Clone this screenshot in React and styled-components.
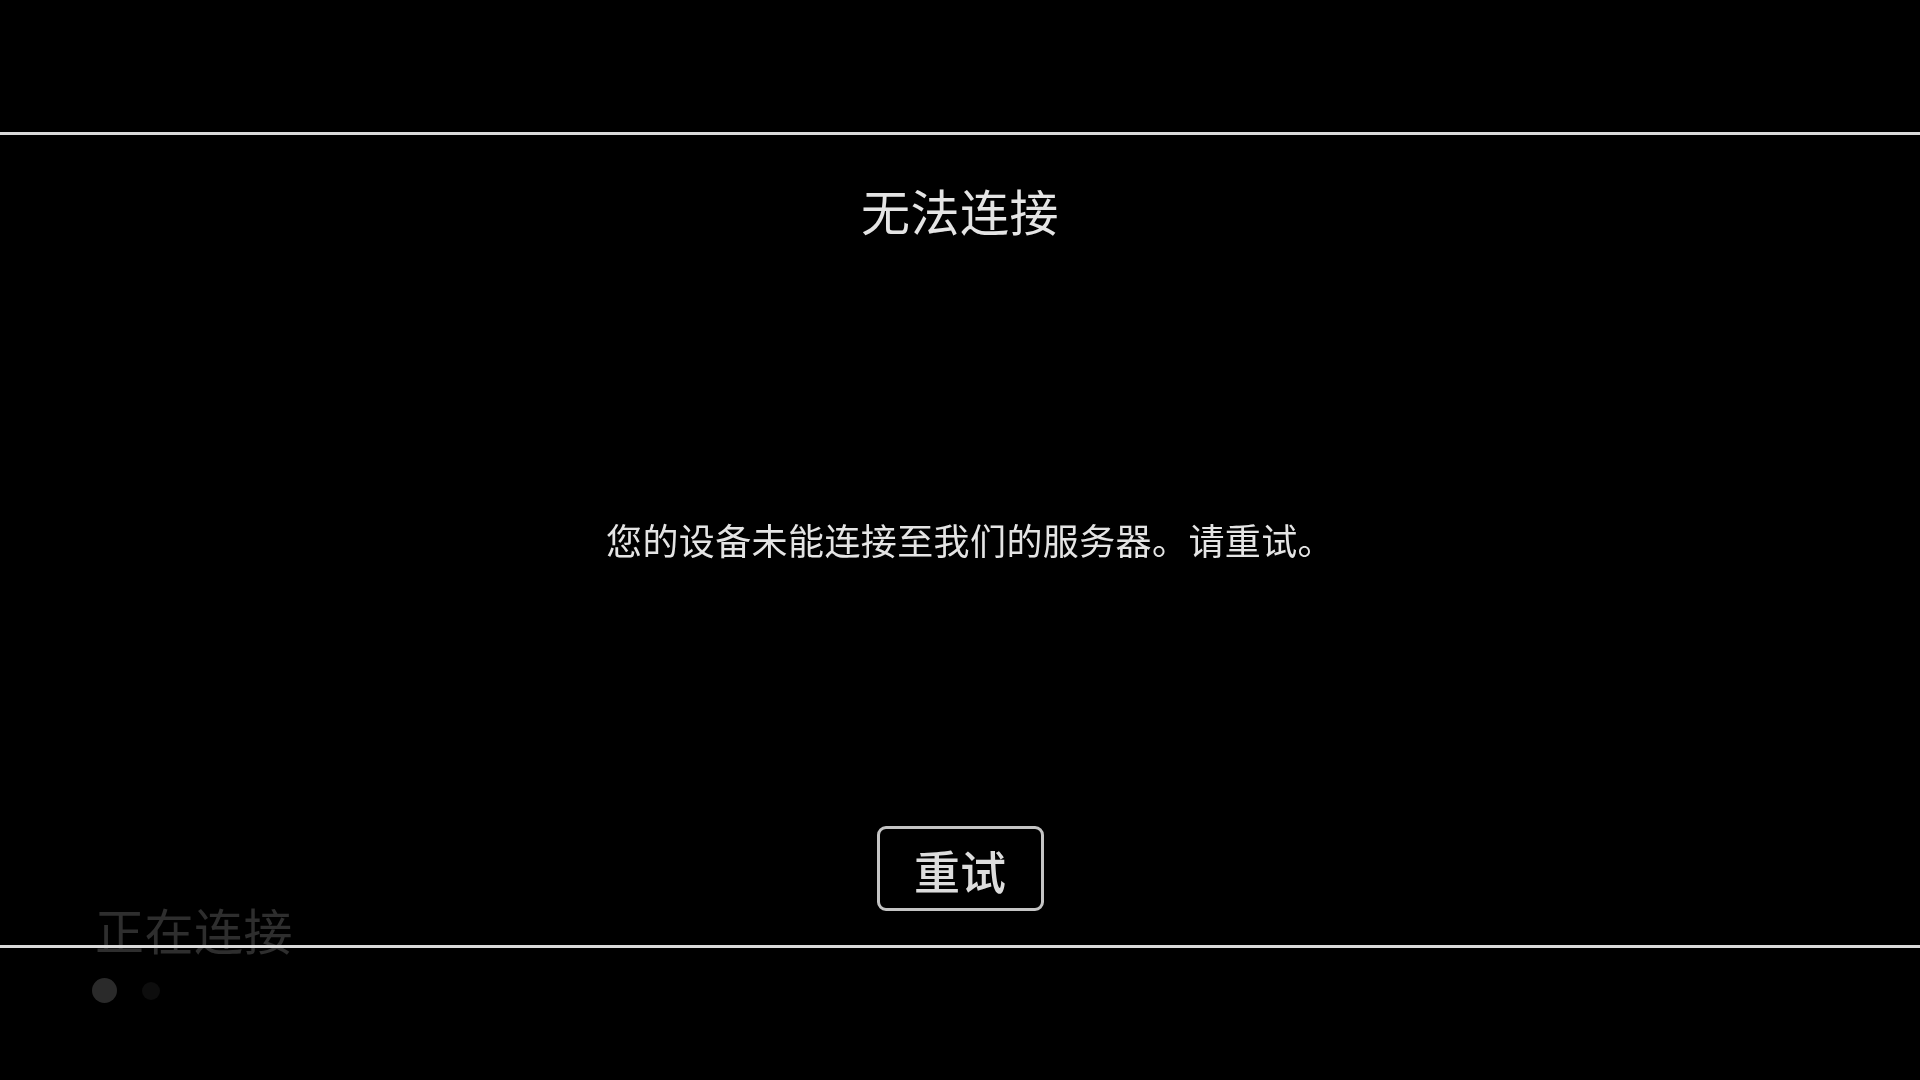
import React from "react";
import styled, { createGlobalStyle } from "styled-components";

const Global = createGlobalStyle`
  html, body { margin: 0; padding: 0; background: #000; }
  body { font-family: "Noto Sans CJK SC", "Noto Sans", sans-serif; }
  * { box-sizing: border-box; }
`;

const Page = styled.div`
  width: 1920px;
  height: 1080px;
  background: #000;
  display: flex;
  flex-direction: column;
  justify-content: flex-end;
  padding: 0 0 77px 95px;
  overflow: hidden;
`;

const Status = styled.div`
  font-size: 49px;
  line-height: 49px;
  color: #2e2e2e;
  letter-spacing: 0.5px;
`;

const Dots = styled.div`
  display: flex;
  align-items: center;
  gap: 25px;
  margin: 25px 0 0 -3px;
`;

const Dot = styled.span`
  display: block;
  width: ${(p) => p.$size}px;
  height: ${(p) => p.$size}px;
  border-radius: 50%;
  background: ${(p) => p.$color};
`;

const Dialog = styled.div`
  position: fixed;
  top: 132px;
  left: 0;
  right: 0;
  height: 816px;
  border-top: 3px solid #d9d9d9;
  border-bottom: 3px solid #d9d9d9;
  display: flex;
  flex-direction: column;
  align-items: center;
`;

const Title = styled.h1`
  margin: 50px 0 0;
  font-size: 49px;
  line-height: 50px;
  font-weight: 400;
  color: #e4e4e4;
  letter-spacing: 0.5px;
`;

const Message = styled.p`
  margin: 286px 0 0;
  padding-left: 20px;
  font-size: 36px;
  line-height: 36px;
  color: #e4e4e4;
  letter-spacing: 0.4px;
`;

const Button = styled.button`
  margin-top: 269px;
  width: 167px;
  height: 85px;
  border: 3px solid #c4c4c4;
  border-radius: 9px;
  background: #000;
  color: #dcdcdc;
  font-family: "Noto Sans CJK SC", sans-serif;
  font-size: 46px;
  font-weight: 500;
  line-height: 1;
  padding: 0;
  display: flex;
  align-items: center;
  justify-content: center;
  cursor: pointer;
`;

export default function App() {
  return (
    <>
      <Global />
      <Page>
        <Status>正在连接</Status>
        <Dots>
          <Dot $size={25} $color="#2a2a2a" />
          <Dot $size={18} $color="#0d0d0d" />
        </Dots>
      </Page>
      <Dialog>
        <Title>无法连接</Title>
        <Message>您的设备未能连接至我们的服务器。请重试。</Message>
        <Button>重试</Button>
      </Dialog>
    </>
  );
}
